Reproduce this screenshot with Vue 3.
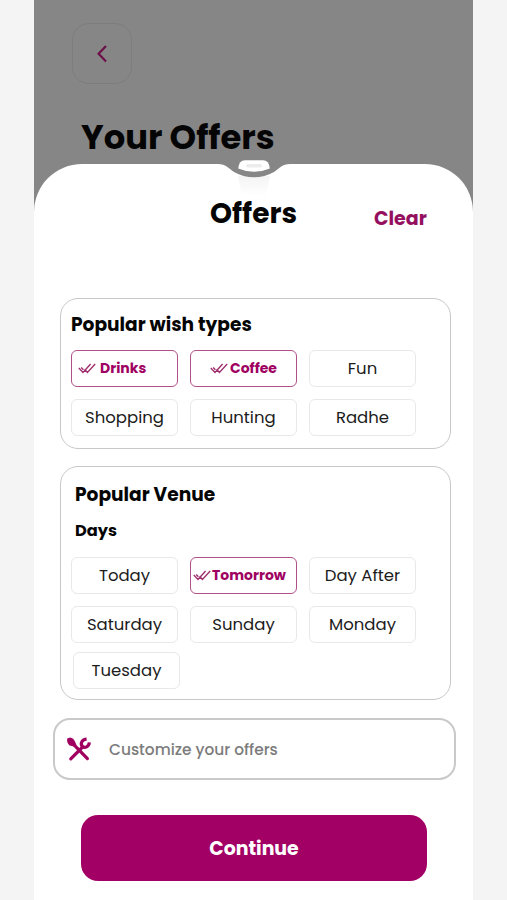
<script setup>
import { ref } from 'vue'

const wishTypes = ref([
  { label: 'Drinks', selected: true, tone: 'drinks' },
  { label: 'Coffee', selected: true, tone: 'coffee' },
  { label: 'Fun' },
  { label: 'Shopping' },
  { label: 'Hunting' },
  { label: 'Radhe' },
])

const days = ref([
  { label: 'Today' },
  { label: 'Tomorrow', selected: true, tone: 'tomorrow' },
  { label: 'Day After' },
  { label: 'Saturday' },
  { label: 'Sunday' },
  { label: 'Monday' },
  { label: 'Tuesday', tone: 'last' },
])

function toggle(item) {
  item.selected = !item.selected
}

function clearAll() {
  for (const item of [...wishTypes.value, ...days.value]) item.selected = false
}
</script>

<template>
  <div class="page">
    <main class="phone">
      <header class="top">
        <button class="back" aria-label="Back">
          <svg width="12" height="20" viewBox="0 0 12 20">
            <path d="M10 2 L2.6 9.8 L10 17.6" fill="none" stroke="#6d1049" stroke-width="2.2" />
          </svg>
        </button>
        <h1>Your Offers</h1>
      </header>

      <section class="sheet">
        <svg class="notch" width="72" height="40" viewBox="0 0 72 40">
          <defs>
            <linearGradient id="glow" x1="0" y1="0" x2="0" y2="1">
              <stop offset="0" stop-color="#ececec" />
              <stop offset="1" stop-color="#fff" />
            </linearGradient>
          </defs>
          <path d="M20 16 H52 L48 36 H24 Z" fill="url(#glow)" opacity=".6" />
          <path d="M0 3 V4 C8 4 10 8 16 12 C28 19 44 19 56 12 C62 8 64 4 72 4 V3 Z" fill="#868686" />
          <path d="M20.2 8.5 Q21 .3 27 .3 H45 Q51 .3 51.8 8.5 Q36 15.2 20.2 8.5 Z" fill="#fff" />
          <rect x="28" y="4" width="16" height="3.4" rx="1.7" fill="#ececec" />
        </svg>

        <div class="sheet-head">
          <h2>Offers</h2>
          <button class="clear" @click="clearAll">Clear</button>
        </div>

        <div class="card wishes">
          <h3>Popular wish types</h3>
          <div class="grid">
            <button
              v-for="item in wishTypes"
              :key="item.label"
              class="chip"
              :class="[item.tone, { selected: item.selected }]"
              @click="toggle(item)"
            >
              <svg v-if="item.selected" class="ticks" width="18" height="11" viewBox="0 0 18 11">
                <path d="M.8 5 L5 9.4 L12.6 1 M6.6 6.2 L9.4 9.4 L17.2 1 M3.2 4.6 L5.4 6.8" />
              </svg>
              <span>{{ item.label }}</span>
            </button>
          </div>
        </div>

        <div class="card venue">
          <h3>Popular Venue</h3>
          <h4>Days</h4>
          <div class="grid">
            <button
              v-for="item in days"
              :key="item.label"
              class="chip"
              :class="[item.tone, { selected: item.selected }]"
              @click="toggle(item)"
            >
              <svg v-if="item.selected" class="ticks" width="18" height="11" viewBox="0 0 18 11">
                <path d="M.8 5 L5 9.4 L12.6 1 M6.6 6.2 L9.4 9.4 L17.2 1 M3.2 4.6 L5.4 6.8" />
              </svg>
              <span>{{ item.label }}</span>
            </button>
          </div>
        </div>

        <div class="customize">
          <svg width="26" height="26" viewBox="0 0 26 26">
            <path d="M1.2 2.6 L4.4 1.6 Q7.6 2.4 9 5.4 L10.6 9.6 L8 10.6 L3.6 9.4 Q.6 7.2 1.2 2.6 Z" fill="#a0005f" />
            <path d="M8.5 9.4 L21.4 22.6" stroke="#a0005f" stroke-width="3.2" stroke-linecap="round" />
            <path d="M4.8 22.8 L16.6 11" stroke="#a0005f" stroke-width="3.2" stroke-linecap="round" />
            <path d="M20.6 3.2 C16 3.4 14 7.4 16.2 10.2 C18.8 12.6 23 10.8 23.3 6.4" fill="none" stroke="#a0005f" stroke-width="3.2" />
          </svg>
          <span>Customize your offers</span>
        </div>

        <button class="continue">Continue</button>
      </section>
    </main>
  </div>
</template>

<style>
body {
  background: #f4f4f4;
}
</style>

<style scoped>
.page {
  height: 900px;
  padding: 0 34px;
  box-sizing: border-box;
  background: #f4f4f4;
  font-family: Poppins, Inter, "Liberation Sans", sans-serif;
  color: #050505;
  overflow: hidden;
}
.phone {
  width: 439px;
  height: 900px;
  background: #868686;
}
.top {
  height: 164px;
  padding: 23px 0 0 38px;
  box-sizing: border-box;
}
button {
  font: inherit;
  color: inherit;
  background: none;
  border: 0;
  padding: 0;
  margin: 0;
  white-space: nowrap;
}
h1, h2, h3, h4 {
  margin: 0;
  font-weight: 700;
  white-space: nowrap;
}
.back {
  display: flex;
  align-items: center;
  justify-content: center;
  width: 60px;
  height: 61px;
  border: 1px solid #7d7d7d;
  border-radius: 17px;
}
h1 {
  margin: 34px 0 0 9px;
  font-size: 33.8px;
  line-height: 40px;
}
.sheet {
  position: relative;
  height: 736px;
  box-sizing: border-box;
  padding-top: 30px;
  background: #fff;
  border-radius: 48px 48px 0 0;
}
.notch {
  position: absolute;
  left: 184px;
  top: -4px;
}
.sheet-head {
  display: flex;
  height: 104px;
}
h2 {
  margin-left: 176px;
  width: 164px;
  font-size: 28px;
  line-height: 40px;
}
.clear {
  font-size: 19px;
  font-weight: 700;
  line-height: 49px;
  height: 48px;
  color: #94105f;
}
.card {
  box-sizing: border-box;
  width: 391px;
  margin-left: 26px;
  border: 1.5px solid #c8c8c8;
  border-radius: 18px;
}
.wishes {
  height: 151px;
  padding: 15px 0 0 10px;
}
.venue {
  height: 234px;
  margin-top: 17px;
  padding: 17px 0 0 10px;
}
h3 {
  font-size: 18.6px;
  line-height: 22px;
}
.venue h3,
.venue h4 {
  margin-left: 4px;
}
h4 {
  margin-top: 15px;
  font-size: 16.2px;
  line-height: 20px;
}
.grid {
  display: grid;
  grid-template-columns: repeat(3, 107px);
  gap: 12px;
}
.wishes .grid {
  margin-top: 14px;
}
.venue .grid {
  margin-top: 16px;
}
.chip {
  display: flex;
  align-items: center;
  justify-content: center;
  height: 37px;
  box-sizing: border-box;
  padding-bottom: 1px;
  border: 1px solid #e8e8e8;
  border-radius: 6px;
  font-size: 16.5px;
  color: #1c1c1c;
}
.chip.selected {
  border: 1.5px solid #b0508a;
  font-size: 14px;
  font-weight: 700;
  color: #a0005f;
}
.chip.drinks {
  justify-content: flex-start;
  padding-left: 6px;
  gap: 4px;
}
.chip.coffee {
  gap: 2px;
}
.chip.tomorrow {
  justify-content: flex-start;
  padding-left: 2px;
  gap: 1px;
}
.chip.last {
  margin: -3px -2px 0 2px;
}
.ticks path {
  fill: none;
  stroke: #a0306f;
  stroke-width: 1.4;
}
.customize {
  display: flex;
  align-items: center;
  box-sizing: border-box;
  width: 403px;
  height: 62px;
  margin: 18px 0 0 19px;
  padding-left: 11px;
  gap: 17px;
  border: 2px solid #c9c9c9;
  border-radius: 17px;
  font-size: 15.4px;
  font-weight: 500;
  color: #7c7c7c;
}
.continue {
  display: block;
  width: 346px;
  height: 66px;
  margin: 35px 0 0 47px;
  border-radius: 17px;
  background: #a20065;
  font-size: 18.9px;
  font-weight: 700;
  color: #fff;
}
</style>
